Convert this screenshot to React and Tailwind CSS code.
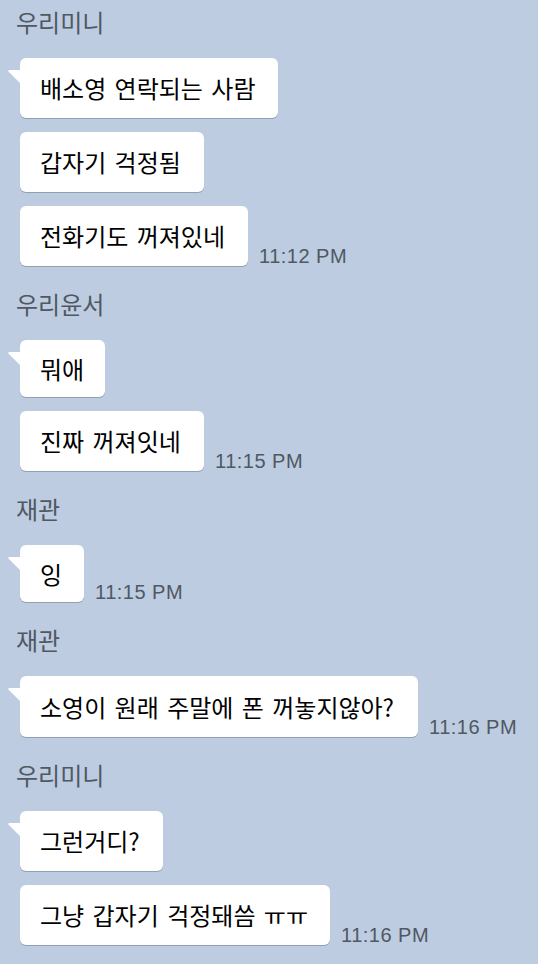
import React from "react";

const groups = [
  {
    name: "우리미니",
    msgs: [
      { t: "배소영 연락되는 사람", w: "w-[258px]", h: "h-[60px]" },
      { t: "갑자기 걱정됨", w: "w-[184px]", h: "h-[60px]" },
      { t: "전화기도 꺼져있네", w: "w-[228px]", h: "h-[60px]" },
    ],
    time: "11:12 PM",
  },
  {
    name: "우리윤서",
    msgs: [
      { t: "뭐애", w: "w-[85px]", h: "h-[57px]" },
      { t: "진짜 꺼져잇네", w: "w-[184px]", h: "h-[60px]" },
    ],
    time: "11:15 PM",
  },
  {
    name: "재관",
    msgs: [{ t: "잉", w: "w-[64px]", h: "h-[57px]" }],
    time: "11:15 PM",
  },
  {
    name: "재관",
    msgs: [{ t: "소영이 원래 주말에 폰 꺼놓지않아?", w: "w-[398px]", h: "h-[61px]" }],
    time: "11:16 PM",
  },
  {
    name: "우리미니",
    msgs: [
      { t: "그런거디?", w: "w-[143px]", h: "h-[60px]" },
      { t: "그냥 갑자기 걱정돼씀 ㅠㅠ", w: "w-[310px]", h: "h-[60px]" },
    ],
    time: "11:16 PM",
  },
];

function Tail() {
  return (
    <svg
      className="absolute left-[-12px] top-[12px]"
      width="13"
      height="14"
      viewBox="0 0 13 14"
    >
      <path d="M1.2 0 L13 0 L13 14 L0.4 1.4 Q-0.2 0.6 1.2 0 Z" fill="#ffffff" />
    </svg>
  );
}

function Bubble({ m, first, time }) {
  return (
    <div className="flex items-end pl-5">
      <div
        className={`relative ${m.w} ${m.h} shrink-0 rounded-[6px] bg-white pl-5 flex items-center whitespace-nowrap text-[24px] [word-spacing:3px] text-black shadow-[0_1px_0_rgba(60,75,95,0.35)]`}
      >
        {first && <Tail />}
        <span className="leading-[30px]">{m.t}</span>
      </div>
      {time && (
        <span
          className="ml-[11px] text-[20px] leading-[20px] tracking-[0.5px] text-[#4f5863] whitespace-nowrap"
          style={{ fontFamily: '"Liberation Sans", Arial, sans-serif' }}
        >
          {time}
        </span>
      )}
    </div>
  );
}

export default function App() {
  return (
    <div
      className="w-[538px] h-[964px] overflow-hidden bg-[#bdcce0] pt-[7px]"
      style={{ fontFamily: '"Noto Sans CJK KR", "Noto Sans", sans-serif' }}
    >
      <div className="flex flex-col gap-[23px]">
        {groups.map((g, gi) => (
          <div key={gi} className="flex flex-col">
            <div className="pl-4 h-[30px] leading-[30px] text-[24px] text-[#4f5863]">
              {g.name}
            </div>
            <div className="mt-[21px] flex flex-col gap-[14px]">
              {g.msgs.map((m, mi) => (
                <Bubble
                  key={mi}
                  m={m}
                  first={mi === 0}
                  time={mi === g.msgs.length - 1 ? g.time : null}
                />
              ))}
            </div>
          </div>
        ))}
      </div>
    </div>
  );
}
